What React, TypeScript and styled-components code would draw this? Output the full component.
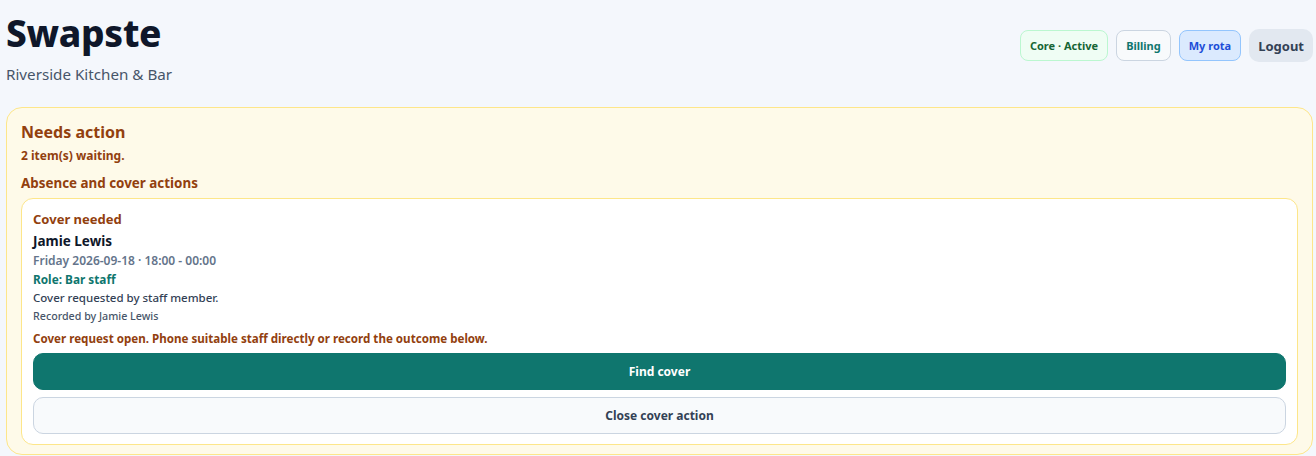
import styled, { createGlobalStyle } from "styled-components";

const GlobalStyle = createGlobalStyle`
  html, body {
    margin: 0;
    background: #f4f7fc;
    font-family: "Noto Sans", "DejaVu Sans", sans-serif;
    color: #0f172a;
  }
`;

type Tone = "green" | "plain" | "blue";

const toneStyles: Record<Tone, { bg: string; border: string; color: string }> = {
  green: { bg: "#effdf4", border: "#bbf7d0", color: "#166534" },
  plain: { bg: "#f8fafc", border: "#cbd5e1", color: "#0f766e" },
  blue: { bg: "#dbeafe", border: "#93c5fd", color: "#1d4ed8" },
};

const App = () => {
  return (
    <>
      <GlobalStyle />
      <Page>
        <Header>
          <Brand>
            <Title>Swapste</Title>
            <Venue>Riverside Kitchen &amp; Bar</Venue>
          </Brand>
          <Nav>
            <Pill tone='green'>Core · Active</Pill>
            <Pill tone='plain'>Billing</Pill>
            <Pill tone='blue'>My rota</Pill>
            <LogoutButton>Logout</LogoutButton>
          </Nav>
        </Header>

        <ActionPanel>
          <PanelTitle>Needs action</PanelTitle>
          <Waiting>2 item(s) waiting.</Waiting>
          <SectionTitle>Absence and cover actions</SectionTitle>
          <CoverCard>
            <CardKind>Cover needed</CardKind>
            <StaffName>Jamie Lewis</StaffName>
            <ShiftTime>Friday 2026-09-18 · 18:00 - 00:00</ShiftTime>
            <Role>Role: Bar staff</Role>
            <Reason>Cover requested by staff member.</Reason>
            <Recorded>Recorded by Jamie Lewis</Recorded>
            <Status>
              Cover request open. Phone suitable staff directly or record the
              outcome below.
            </Status>
            <Actions>
              <ActionButton primary>Find cover</ActionButton>
              <ActionButton>Close cover action</ActionButton>
            </Actions>
          </CoverCard>
        </ActionPanel>
      </Page>
    </>
  );
};

const Page = styled.div`
  padding: 8px 3px 0 6px;
`;

const Header = styled.header`
  display: flex;
  justify-content: space-between;
  align-items: flex-start;
`;

const Brand = styled.div`
  display: flex;
  flex-direction: column;
`;

const Title = styled.h1`
  margin: 0;
  font-size: 37px;
  line-height: 50px;
  font-weight: 800;
  color: #0f172a;
  letter-spacing: -0.3px;
`;

const Venue = styled.p`
  margin: 6px 0 0;
  font-size: 15.2px;
  line-height: 20px;
  color: #475569;
`;

const Nav = styled.nav`
  display: flex;
  align-items: center;
  gap: 8px;
  margin-top: 21px;
`;

const Pill = styled.span<{ tone: Tone }>`
  display: inline-flex;
  align-items: center;
  height: 31px;
  box-sizing: border-box;
  padding: 0 9px;
  border-radius: 8px;
  font-size: 11px;
  font-weight: 700;
  background: ${(p) => toneStyles[p.tone].bg};
  border: 1px solid ${(p) => toneStyles[p.tone].border};
  color: ${(p) => toneStyles[p.tone].color};
`;

const LogoutButton = styled.button`
  height: 33px;
  padding: 0 9px;
  border: none;
  border-radius: 10px;
  background: #e2e8f0;
  color: #334155;
  font-family: inherit;
  font-size: 13px;
  font-weight: 700;
`;

const ActionPanel = styled.section`
  margin-top: 23px;
  padding: 13px 14px 9px;
  border: 1px solid #fde68a;
  border-radius: 16px;
  background: #fefae9;
  color: #92400e;
`;

const PanelTitle = styled.h2`
  margin: 0;
  font-size: 16px;
  line-height: 22px;
  font-weight: 700;
`;

const Waiting = styled.p`
  margin: 4px 0 0;
  font-size: 12px;
  line-height: 18px;
  font-weight: 700;
`;

const SectionTitle = styled.h3`
  margin: 9px 0 0;
  font-size: 13.4px;
  line-height: 18px;
  font-weight: 700;
`;

const CoverCard = styled.article`
  margin-top: 6px;
  padding: 10px 11px 10px;
  border: 1px solid #fde68a;
  border-radius: 12px;
  background: #ffffff;
  display: flex;
  flex-direction: column;
`;

const CardKind = styled.div`
  font-size: 13px;
  line-height: 20px;
  font-weight: 700;
  color: #92400e;
`;

const StaffName = styled.div`
  margin-top: 2px;
  font-size: 13.5px;
  line-height: 20px;
  font-weight: 700;
  color: #0f172a;
`;

const ShiftTime = styled.div`
  font-size: 12px;
  line-height: 19px;
  font-weight: 600;
  color: #64748b;
`;

const Role = styled.div`
  font-size: 11.8px;
  line-height: 19px;
  font-weight: 700;
  color: #0f766e;
`;

const Reason = styled.div`
  font-size: 11.5px;
  line-height: 18px;
  font-weight: 500;
  color: #334155;
`;

const Recorded = styled.div`
  font-size: 10.7px;
  line-height: 18px;
  font-weight: 500;
  color: #475569;
`;

const Status = styled.div`
  margin-top: 5px;
  font-size: 11.6px;
  line-height: 18px;
  font-weight: 700;
  color: #92400e;
`;

const Actions = styled.div`
  display: flex;
  flex-direction: column;
  gap: 7px;
  margin-top: 5px;
`;

const ActionButton = styled.button<{ primary?: boolean }>`
  height: 37px;
  border-radius: 10px;
  font-family: inherit;
  font-size: 12px;
  font-weight: 700;
  border: 1px solid ${(p) => (p.primary ? "#0f766e" : "#cbd5e1")};
  background: ${(p) => (p.primary ? "#0f766e" : "#f8fafc")};
  color: ${(p) => (p.primary ? "#ffffff" : "#334155")};
`;

export default App;
